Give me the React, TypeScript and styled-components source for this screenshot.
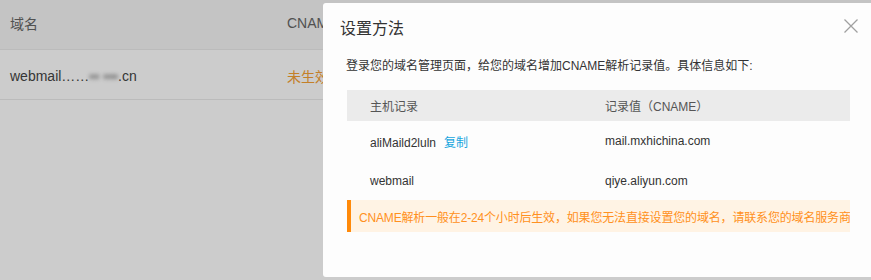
import React from "react";
import styled, { createGlobalStyle } from "styled-components";

const Global = createGlobalStyle`
  html, body { margin: 0; padding: 0; background: #fff; overflow: hidden; }
  body { font-family: "Liberation Sans", Arial, "Noto Sans CJK SC", sans-serif; }
  * { box-sizing: border-box; }
`;

const Page = styled.div`
  width: 871px;
  height: 280px;
  background: #fff;
`;

const PageRow = styled.div<{ $head?: boolean }>`
  display: grid;
  grid-template-columns: 277px 1fr;
  height: 50px;
  align-items: center;
  padding-left: 10px;
  padding-bottom: ${(p) => (p.$head ? "4px" : "0")};
  padding-top: ${(p) => (p.$head ? "0" : "3px")};
  font-size: 14px;
  background: ${(p) => (p.$head ? "#f5f5f5" : "#fff")};
  color: ${(p) => (p.$head ? "#666" : "#444")};
  border-bottom: 1px solid #eaeaea;
`;

const Status = styled.span`
  color: #f5a033;
`;

const Blurred = styled.span`
  filter: blur(2px);
  color: #777;
`;

const Overlay = styled.div`
  position: fixed;
  inset: 0;
  background: rgba(0, 0, 0, 0.2);
`;

const Modal = styled.div`
  position: fixed;
  top: 3px;
  left: 323px;
  width: 551px;
  height: 274px;
  background: #fdfdfd;
  border-radius: 3px;
  font-family: "Liberation Sans", Arial, "Noto Sans CJK SC", sans-serif;
`;

const ModalHead = styled.div`
  display: flex;
  align-items: center;
  justify-content: space-between;
  padding: 16px 16px 0 17px;
  height: 36px;
`;

const Title = styled.h2`
  margin: 0;
  font-size: 16px;
  font-weight: normal;
  line-height: 20px;
  color: #333;
`;

const Close = styled.button`
  border: none;
  background: none;
  padding: 0;
  width: 14px;
  height: 14px;
  margin-top: -6px;
  display: flex;
`;

const Body = styled.div`
  padding: 17px 24px 0 24px;
`;

const Desc = styled.p`
  margin: 0 0 14px -1px;
  font-size: 12px;
  line-height: 20px;
  color: #333;
`;

const Table = styled.div`
  width: 503px;
`;

const TRow = styled.div<{ $head?: boolean }>`
  display: grid;
  grid-template-columns: 235px 1fr;
  align-items: center;
  height: ${(p) => (p.$head ? "31px" : "40px")};
  padding-left: 23px;
  font-size: 12px;
  background: ${(p) => (p.$head ? "#ebebeb" : "transparent")};
  color: ${(p) => (p.$head ? "#555" : "#333")};
`;

const Copy = styled.a`
  color: #17a6de;
  margin-left: 8px;
  cursor: pointer;
`;

const Notice = styled.div`
  width: 503px;
  height: 32px;
  margin-top: -1px;
  display: flex;
  align-items: center;
  padding-left: 8px;
  background: #fff3e4;
  border-left: 4px solid #ff8a0a;
  color: #ff9020;
  font-size: 12px;
  letter-spacing: -0.17px;
  white-space: nowrap;
  overflow: hidden;
`;

export default function App() {
  return (
    <>
      <Global />
      <Page>
        <PageRow $head>
          <span>域名</span>
          <span>CNAME</span>
        </PageRow>
        <PageRow>
          <span>
            webmail……<Blurred>▪▪ ▪▪▪</Blurred>.cn
          </span>
          <Status>未生效</Status>
        </PageRow>
      </Page>
      <Overlay />
      <Modal>
        <ModalHead>
          <Title>设置方法</Title>
          <Close aria-label="关闭">
            <svg width="14" height="14" viewBox="0 0 14 14">
              <path d="M0.5 0.5 L13.5 13.5 M13.5 0.5 L0.5 13.5" stroke="#a0a0a0" strokeWidth="1.3" fill="none" />
            </svg>
          </Close>
        </ModalHead>
        <Body>
          <Desc>登录您的域名管理页面，给您的域名增加CNAME解析记录值。具体信息如下:</Desc>
          <Table>
            <TRow $head>
              <span>主机记录</span>
              <span>记录值（CNAME）</span>
            </TRow>
            <TRow>
              <span>
                aliMaild2luln<Copy>复制</Copy>
              </span>
              <span>mail.mxhichina.com</span>
            </TRow>
            <TRow>
              <span>webmail</span>
              <span>qiye.aliyun.com</span>
            </TRow>
          </Table>
          <Notice>CNAME解析一般在2-24个小时后生效，如果您无法直接设置您的域名，请联系您的域名服务商</Notice>
        </Body>
      </Modal>
    </>
  );
}
